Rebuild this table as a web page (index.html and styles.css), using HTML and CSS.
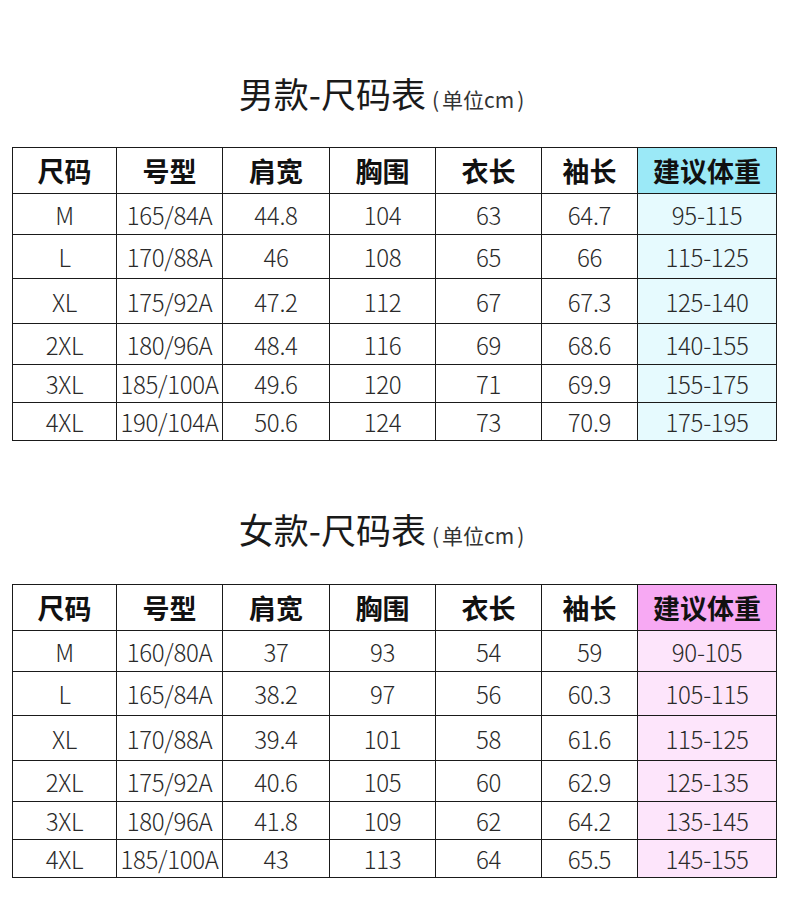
FILE: index.html
```html
<!DOCTYPE html>
<html lang="zh-CN">
<head>
<meta charset="utf-8">
<title>尺码表</title>
<link rel="stylesheet" href="styles.css">
</head>
<body>
<div class="page">
  <section class="section men">
    <h1 class="title"><span class="main">男款-尺码表</span><span class="unit"><span class="paren">(</span>单位cm<span class="paren">)</span></span></h1>
    <table class="size-table">
      <colgroup>
        <col class="c1"><col class="c2"><col class="c3"><col class="c4"><col class="c5"><col class="c6"><col class="c7">
      </colgroup>
      <thead>
        <tr><th>尺码</th><th>号型</th><th>肩宽</th><th>胸围</th><th>衣长</th><th>袖长</th><th class="hl">建议体重</th></tr>
      </thead>
      <tbody>
        <tr><td>M</td><td>165/84A</td><td>44.8</td><td>104</td><td>63</td><td>64.7</td><td class="hl">95-115</td></tr>
        <tr><td>L</td><td>170/88A</td><td>46</td><td>108</td><td>65</td><td>66</td><td class="hl">115-125</td></tr>
        <tr><td>XL</td><td>175/92A</td><td>47.2</td><td>112</td><td>67</td><td>67.3</td><td class="hl">125-140</td></tr>
        <tr><td>2XL</td><td>180/96A</td><td>48.4</td><td>116</td><td>69</td><td>68.6</td><td class="hl">140-155</td></tr>
        <tr><td>3XL</td><td>185/100A</td><td>49.6</td><td>120</td><td>71</td><td>69.9</td><td class="hl">155-175</td></tr>
        <tr><td>4XL</td><td>190/104A</td><td>50.6</td><td>124</td><td>73</td><td>70.9</td><td class="hl">175-195</td></tr>
      </tbody>
    </table>
  </section>
  <section class="section women">
    <h1 class="title"><span class="main">女款-尺码表</span><span class="unit"><span class="paren">(</span>单位cm<span class="paren">)</span></span></h1>
    <table class="size-table">
      <colgroup>
        <col class="c1"><col class="c2"><col class="c3"><col class="c4"><col class="c5"><col class="c6"><col class="c7">
      </colgroup>
      <thead>
        <tr><th>尺码</th><th>号型</th><th>肩宽</th><th>胸围</th><th>衣长</th><th>袖长</th><th class="hl">建议体重</th></tr>
      </thead>
      <tbody>
        <tr><td>M</td><td>160/80A</td><td>37</td><td>93</td><td>54</td><td>59</td><td class="hl">90-105</td></tr>
        <tr><td>L</td><td>165/84A</td><td>38.2</td><td>97</td><td>56</td><td>60.3</td><td class="hl">105-115</td></tr>
        <tr><td>XL</td><td>170/88A</td><td>39.4</td><td>101</td><td>58</td><td>61.6</td><td class="hl">115-125</td></tr>
        <tr><td>2XL</td><td>175/92A</td><td>40.6</td><td>105</td><td>60</td><td>62.9</td><td class="hl">125-135</td></tr>
        <tr><td>3XL</td><td>180/96A</td><td>41.8</td><td>109</td><td>62</td><td>64.2</td><td class="hl">135-145</td></tr>
        <tr><td>4XL</td><td>185/100A</td><td>43</td><td>113</td><td>64</td><td>65.5</td><td class="hl">145-155</td></tr>
      </tbody>
    </table>
  </section>
</div>
</body>
</html>
```
FILE: styles.css
```css
html, body {
  margin: 0;
  padding: 0;
  background: #ffffff;
}
body {
  font-family: "Noto Sans CJK SC", "Noto Sans", sans-serif;
  color: #222222;
}
.page {
  width: 790px;
  padding-top: 72px;
}
.section {
  display: flex;
  flex-direction: column;
  align-items: flex-start;
}
.women {
  margin-top: 67px;
}
.title {
  margin: 0 0 33px 0;
  align-self: center;
  height: 42px;
  line-height: 42px;
  font-weight: 400;
  display: flex;
  align-items: baseline;
  padding-right: 24px;
  color: #1a1a1a;
}
.women .title {
  margin-bottom: 34px;
}
.title .main {
  font-size: 35px;
}
.title .unit {
  font-size: 21px;
  margin-left: 3px;
  color: #333333;
}
.title .paren {
  display: inline-block;
  margin: 0 3px;
}
.size-table {
  margin-left: 12px;
  width: 765px;
  table-layout: fixed;
  border-collapse: collapse;
}
.c1 { width: 104px; }
.c2 { width: 106px; }
.c3 { width: 107px; }
.c4 { width: 106px; }
.c5 { width: 106px; }
.c6 { width: 96px; }
.c7 { width: 139px; }
.size-table th,
.size-table td {
  border: 1px solid #1a1a1a;
  padding: 0;
  text-align: center;
  vertical-align: middle;
  white-space: nowrap;
  overflow: visible;
}
.size-table th {
  height: 45px;
  font-size: 27px;
  font-weight: 700;
  color: #111111;
}
.size-table td {
  font-size: 24px;
  font-weight: 300;
  color: #2a2a2a;
  letter-spacing: -0.3px;
}
.size-table tbody tr:nth-child(1) td { height: 40px; }
.size-table tbody tr:nth-child(2) td { height: 43px; }
.size-table tbody tr:nth-child(3) td { height: 44px; }
.size-table tbody tr:nth-child(4) td { height: 40px; }
.size-table tbody tr:nth-child(5) td { height: 37px; }
.size-table tbody tr:nth-child(6) td { height: 37px; }
.men th.hl { background: #9be9f7; }
.men td.hl { background: #e6fafe; }
.women th.hl { background: #f7a9f3; }
.women td.hl { background: #fde5fb; }
```
